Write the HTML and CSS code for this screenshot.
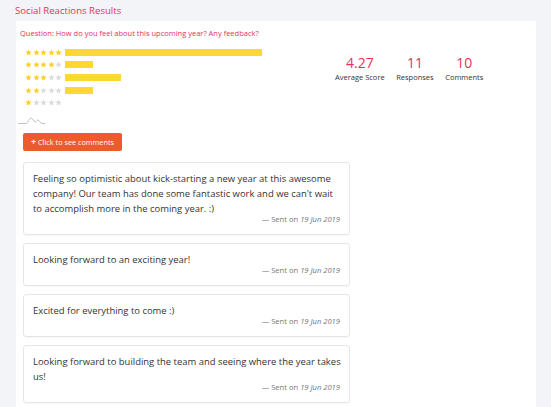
FILE: index.html
```html
<!DOCTYPE html>
<html>
<head>
<meta charset="utf-8">
<link rel="stylesheet" href="styles.css">
</head>
<body>
<svg class="defs" width="0" height="0">
  <defs>
    <symbol id="star" viewBox="0 0 24 24">
      <path d="M12 1.5l3.2 7 7.6.8-5.7 5.1 1.6 7.5L12 18l-6.7 3.9 1.6-7.5L1.2 9.3l7.6-.8z"/>
    </symbol>
  </defs>
</svg>
<h1 class="title">Social Reactions Results</h1>
<div class="panel">
  <p class="question">Question: How do you feel about this upcoming year? Any feedback?</p>
  <div class="summary">
    <div class="ratings">
      <div class="row">
        <span class="stars s5"><svg><use href="#star"/></svg><svg><use href="#star"/></svg><svg><use href="#star"/></svg><svg><use href="#star"/></svg><svg><use href="#star"/></svg></span>
        <span class="track"><span class="bar" style="width:100%"></span></span>
      </div>
      <div class="row">
        <span class="stars s4"><svg><use href="#star"/></svg><svg><use href="#star"/></svg><svg><use href="#star"/></svg><svg><use href="#star"/></svg><svg><use href="#star"/></svg></span>
        <span class="track"><span class="bar" style="width:14.29%"></span></span>
      </div>
      <div class="row">
        <span class="stars s3"><svg><use href="#star"/></svg><svg><use href="#star"/></svg><svg><use href="#star"/></svg><svg><use href="#star"/></svg><svg><use href="#star"/></svg></span>
        <span class="track"><span class="bar" style="width:28.57%"></span></span>
      </div>
      <div class="row">
        <span class="stars s2"><svg><use href="#star"/></svg><svg><use href="#star"/></svg><svg><use href="#star"/></svg><svg><use href="#star"/></svg><svg><use href="#star"/></svg></span>
        <span class="track"><span class="bar" style="width:14.29%"></span></span>
      </div>
      <div class="row">
        <span class="stars s1"><svg><use href="#star"/></svg><svg><use href="#star"/></svg><svg><use href="#star"/></svg><svg><use href="#star"/></svg><svg><use href="#star"/></svg></span>
        <span class="track"><span class="bar" style="width:0%"></span></span>
      </div>
      <svg class="spark" width="27" height="8" viewBox="0 0 27 8">
        <path d="M0 7.5H8C10 7.5 11 2 13 2S15.5 6 17 6S18.5 4 20 4S22 7.5 24 7.5H27" fill="none" stroke="#b9bcc2" stroke-width="0.9"/>
      </svg>
    </div>
    <div class="stats">
      <div class="stat"><span class="num">4.27</span><span class="label">Average Score</span></div>
      <div class="stat"><span class="num">11</span><span class="label">Responses</span></div>
      <div class="stat"><span class="num">10</span><span class="label">Comments</span></div>
    </div>
  </div>
  <button class="btn"><span class="plus">+</span> Click to see comments</button>
  <div class="comments">
    <div class="card">
      <p class="text">Feeling so optimistic about kick-starting a new year at this awesome company! Our team has done some fantastic work and we can't wait to accomplish more in the coming year. :)</p>
      <p class="sent">— Sent on <em>19 Jun 2019</em></p>
    </div>
    <div class="card">
      <p class="text">Looking forward to an exciting year!</p>
      <p class="sent">— Sent on <em>19 Jun 2019</em></p>
    </div>
    <div class="card">
      <p class="text">Excited for everything to come :)</p>
      <p class="sent">— Sent on <em>19 Jun 2019</em></p>
    </div>
    <div class="card">
      <p class="text">Looking forward to building the team and seeing where the year takes us!</p>
      <p class="sent">— Sent on <em>19 Jun 2019</em></p>
    </div>
  </div>
</div>
</body>
</html>
```

FILE: styles.css
```css
html, body {
  margin: 0;
  padding: 0;
}
body {
  background: #f2f4f8;
  font-family: "Open Sans", "Noto Sans", sans-serif;
  color: #333;
  overflow: hidden;
}
.defs {
  position: absolute;
  width: 0;
  height: 0;
}
.title {
  margin: 0;
  padding: 4px 0 0 15px;
  height: 17px;
  font-size: 9.6px;
  line-height: 14px;
  font-weight: 400;
  color: #e6325b;
}
.panel {
  margin-left: 16px;
  width: 520px;
  background: #fff;
  padding: 6px 0 4px 4px;
  box-sizing: border-box;
}
.question {
  margin: 0;
  font-size: 7.5px;
  line-height: 12px;
  color: #e6325b;
}
.summary {
  display: flex;
  align-items: flex-start;
  margin-top: 7px;
}
.ratings {
  width: 300px;
}
.row {
  display: flex;
  align-items: center;
  height: 12.6px;
  padding-left: 5px;
}
.stars {
  display: flex;
  gap: 0.5px;
  width: 40px;
}
.stars svg {
  width: 7px;
  height: 7px;
  fill: #dcdcdc;
}
.s5 svg:nth-child(-n+5),
.s4 svg:nth-child(-n+4),
.s3 svg:nth-child(-n+3),
.s2 svg:nth-child(-n+2),
.s1 svg:nth-child(-n+1) {
  fill: #fdd02e;
}
.track {
  width: 197px;
  height: 7px;
}
.bar {
  display: block;
  height: 7px;
  background: #fdd835;
}
.spark {
  display: block;
  margin: 7px 0 0 -2px;
}
.stats {
  display: flex;
  gap: 11.5px;
  margin-left: 15px;
  margin-top: 8px;
}
.stat {
  display: flex;
  flex-direction: column;
  align-items: center;
}
.num {
  font-size: 14px;
  line-height: 18px;
  color: #e6325b;
}
.label {
  font-size: 7.5px;
  line-height: 10px;
  color: #333;
}
.btn {
  display: block;
  margin: 9px 0 0 3px;
  width: 99px;
  height: 18px;
  padding: 0;
  border: 0;
  border-radius: 2px;
  background: #ef5a2b;
  color: #fff;
  font-family: "Open Sans", "Noto Sans", sans-serif;
  font-size: 7.3px;
  line-height: 18px;
  text-align: center;
}
.plus {
  font-weight: 700;
  font-size: 9px;
}
.comments {
  display: flex;
  flex-direction: column;
  gap: 8px;
  margin: 11px 0 0 3px;
  width: 327px;
}
.card {
  border: 1px solid #e4e6ea;
  border-radius: 3px;
  padding: 8px 8px 9px 9px;
  box-shadow: 0 1px 1px rgba(0,0,0,0.03);
}
.text {
  margin: 0;
  font-size: 9.45px;
  line-height: 15px;
  color: #333;
}
.sent {
  margin: -2px 1px 0 0;
  text-align: right;
  font-size: 7.6px;
  line-height: 11px;
  color: #777;
}
.sent em {
  font-style: italic;
}
```
